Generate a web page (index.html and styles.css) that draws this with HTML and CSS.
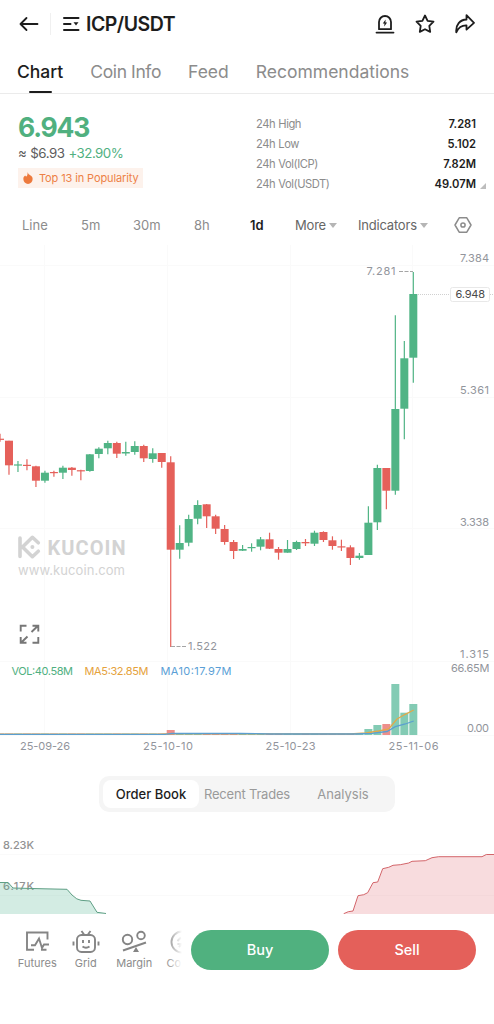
FILE: index.html
```
<!DOCTYPE html>
<html lang="en">
<head>
  <meta charset="UTF-8">
  <title>ICP/USDT</title>
  <meta name="viewport" content="width=device-width, initial-scale=1.0">
  <link rel="stylesheet" href="styles.css">
</head>
<body>

<header class="header">
  <svg class="back" width="20" height="16" viewBox="0 0 20 16"><path d="M18.500 8H1.500M7.500 2L1.500 8L7.500 14"/></svg>
  <span class="divider"></span>
  <svg class="menu" width="17" height="16" viewBox="0 0 17 16"><path d="M1 2H15.500M1 8H7.500M1 14H15.500"/><path class="solid" d="M10.500 6.200h5L13 9.600z"/></svg>
  <h1>ICP/USDT</h1>
  <div class="actions">
    <svg width="20" height="20" viewBox="0 0 20 20"><path d="M4 15.200V8a6 6 0 0 1 12 0v7.200zM1.500 18.600h17"/><path class="solid" d="M10.600 5.500L7.800 9.400h1.700l-.3 3 2.900-4h-1.700z"/></svg>
    <svg width="20" height="20" viewBox="0 0 20 20"><path d="M10 1.500l2.600 5.300 5.900.9-4.200 4.200.9 6-5.200-2.700-5.200 2.700.9-6L1.500 7.700l5.900-.9z"/></svg>
    <svg width="20" height="20" viewBox="0 0 20 20"><path d="M11.500 1.200L19 8.800l-7.500 6.800v-4.200C6 11.200 3.500 13.500 1.300 18.300 0.500 10.500 5 5.800 11.500 5.500z"/></svg>
  </div>
</header>

<nav class="tabs">
  <a class="active">Chart</a>
  <a class="coin">Coin Info</a>
  <a>Feed</a>
  <a>Recommendations</a>
</nav>

<section class="summary">
  <div class="price-box">
    <div class="price">6.943</div>
    <div class="fiat">≈ $6.93 <span>+32.90%</span></div>
    <div class="rank">
      <svg width="10" height="12" viewBox="0 0 10 12"><path d="M4.600 0C5 2 6.500 2.600 7.200 3.300 9 4.300 9.800 5.500 9.600 7.300A4.600 4.600 0 0 1 .4 7.300C.2 5.500 1 4.400 2.200 3.500c.2.700.7 1 1.200 1C4.500 3.500 4.700 1.800 4.600 0z"/></svg>
      <span>Top 13 in Popularity</span>
    </div>
  </div>
  <div class="stats">
    <div><span>24h High</span><b>7.281</b></div>
    <div><span>24h Low</span><b>5.102</b></div>
    <div><span>24h Vol(ICP)</span><b>7.82M</b></div>
    <div><span>24h Vol(USDT)</span><b>49.07M</b></div>
    <i class="corner"></i>
  </div>
</section>

<nav class="intervals">
  <span>Line</span>
  <span>5m</span>
  <span>30m</span>
  <span>8h</span>
  <span class="active">1d</span>
  <span class="drop">More<i></i></span>
  <span class="drop">Indicators<i></i></span>
  <svg width="18" height="18" viewBox="0 0 18 18"><path d="M5.200 1.800h7.600L17 9l-4.200 7.200H5.200L1 9z"/><circle cx="9" cy="9" r="2.100"/></svg>
</nav>

<svg class="chart" width="494" height="512" viewBox="0 245 494 512">
  <g class="grid">
    <path d="M44.500 245V735M167.500 245V735M290.500 245V735M412.500 245V735"/>
    <path d="M0 265.500H494M0 397.500H494M0 528.500H494M0 661.500H494M0 735.500H494"/>
  </g>

  <g class="watermark">
    <path d="M20 538V556.500M38.300 542.800L32.400 537.300L22.500 547L32.400 556.700L38.300 551.200"/>
    <circle cx="32.400" cy="547" r="2"/>
    <text class="brand" x="47.500" y="554.500" textLength="78">KUCOIN</text>
    <text class="site" x="18" y="574.500" textLength="107">www.kucoin.com</text>
  </g>

  <g id="candles"></g>
  <g id="volume"></g>
  <path class="ma5" d="M0 734.200H160L172 733.600 350 734 366 733 378.700 731 388.700 729 397 719 405.300 714.300 413.700 710"/>
  <path class="ma10" d="M0 734.300H165L172 733.500 240 733.300 270 734H355L372 733.300 387 731.500 395.300 726.700 405.300 724 413.700 721"/>

  <path class="guide" d="M171 646.500H186M399 271.500H413"/>
  <path class="last" d="M418 294.500H494"/>
  <rect class="last-box" x="450.500" y="287.500" width="39" height="14" rx="2"/>

  <g class="labels">
    <text x="188" y="650.300" textLength="29">1.522</text>
    <text x="366.500" y="274.800" textLength="29">7.281</text>
    <text x="460" y="262.300" textLength="29">7.384</text>
    <text class="dark" x="455.500" y="298.300" textLength="29.500">6.948</text>
    <text x="460" y="394.300" textLength="29">5.361</text>
    <text x="460" y="526.300" textLength="29">3.338</text>
    <text x="460" y="658.300" textLength="29">1.315</text>
    <text x="451" y="671.500" textLength="38.500">66.65M</text>
    <text x="467" y="732" textLength="22">0.00</text>
    <text x="20" y="749.500" textLength="50">25-09-26</text>
    <text x="143" y="749.500" textLength="50">25-10-10</text>
    <text x="265.500" y="749.500" textLength="50">25-10-23</text>
    <text x="388.500" y="749.500" textLength="50">25-11-06</text>
    <text class="vol" x="11.500" y="675.300" textLength="61.500">VOL:40.58M</text>
    <text class="m5" x="84.500" y="675.300" textLength="64">MA5:32.85M</text>
    <text class="m10" x="160.500" y="675.300" textLength="71">MA10:17.97M</text>
  </g>

  <path class="expand" d="M20.700 631.500V625.700H26.500M38.300 637V642.800H32.500M31.500 632L38 625.700M32.500 625.700H38.300V631.500M27.500 636.500L21 642.800M26.500 642.800H20.700V637"/>
</svg>

<nav class="segment">
  <span class="active">Order Book</span>
  <span class="trades">Recent Trades</span>
  <span>Analysis</span>
</nav>

<svg class="depth" width="494" height="89" viewBox="0 825 494 89">
  <path class="grid-line" d="M0 854.500H494M0 895.500H494"/>
  <text x="3" y="849.300" textLength="31">8.23K</text>
  <text x="3" y="890" textLength="31">6.17K</text>
  <path class="bid-fill" d="M0 882.500H8L13 888 44 888.800 67 889.300 72 895Q77 900 81 900.300L90 901 97 912.300 106 914H0z"/>
  <path class="bid" d="M0 882.500H8L13 888 44 888.800 67 889.300 72 895Q77 900 81 900.300L90 901 97 912.300 106 913.500"/>
  <path class="ask-fill" d="M343.700 914L348.300 911.700 353 911 358 895.700 363.700 894.700 367.700 892.700 373 882.700 377.700 882 382.700 868.700 388.700 867.300 393 865.300 400.300 864.700 408.700 863 412 861.300 425.300 860.700 432 857.700 438.700 856.700H482L486.300 854.500H494V914z"/>
  <path class="ask" d="M343.700 913.700L348.300 911.700 353 911 358 895.700 363.700 894.700 367.700 892.700 373 882.700 377.700 882 382.700 868.700 388.700 867.300 393 865.300 400.300 864.700 408.700 863 412 861.300 425.300 860.700 432 857.700 438.700 856.700H482L486.300 854.500H494"/>
</svg>

<footer class="bottom">
  <div class="shortcuts">
    <a class="futures">
      <svg width="26" height="22" viewBox="0 0 26 22"><path d="M10 19.800H3V2.500H23.500V9.500M7 15.200H11L15 8.500 18 18 20 14.500H25M17 19.800H22.500"/></svg>
      <span>Futures</span>
    </a>
    <a class="grid-bot">
      <svg width="28" height="24" viewBox="0 0 28 24"><rect x="5" y="5" width="18" height="17" rx="4.500"/><path d="M9.500 1L12 4.500M18.500 1L16 4.500M1.500 11.500V15.500M26.500 11.500V15.500M11 10V13M17 10V13M10.500 16.500Q14 19 17.500 16.500"/></svg>
      <span>Grid</span>
    </a>
    <a class="margin">
      <svg width="26" height="22" viewBox="0 0 26 22"><circle cx="6.500" cy="9.500" r="4.700"/><circle cx="20" cy="5.500" r="3.800"/><path d="M2 20.500L25 12.500"/><path class="tri" d="M15 17L18 22H12z"/></svg>
      <span>Margin</span>
    </a>
    <a class="more">
      <svg width="24" height="24" viewBox="0 0 24 24"><circle cx="12" cy="12" r="10.500"/><path d="M7.500 11L11 7.500M7.500 14H12L9 17"/></svg>
      <span>Co</span>
    </a>
  </div>
  <button class="buy">Buy</button>
  <button class="sell">Sell</button>
</footer>

<script src="chart.js"></script>
</body>
</html>
```
FILE: styles.css
```
* {
  box-sizing: border-box;
}
body {
  margin: 0;
  width: 494px;
  height: 1024px;
  overflow: hidden;
  background: #fff;
  color: #1d1d1d;
  font-family: Inter, Roboto, sans-serif;
}
svg {
  display: block;
  flex: none;
  fill: none;
}
.header {
  display: flex;
  align-items: center;
  height: 48px;
  padding: 0 19px;
}
.header svg {
  stroke: #1d1d1d;
  stroke-width: 1.8;
  stroke-linecap: round;
  stroke-linejoin: round;
}
.header .menu {
  stroke-width: 2;
}
.header .solid {
  fill: #1d1d1d;
  stroke: none;
}
.divider {
  width: 1px;
  height: 22px;
  margin: 0 12px 0 11px;
  background: #f0f0f0;
}
h1 {
  margin: 0 0 0 6px;
  font-size: 19.5px;
  font-weight: 600;
  letter-spacing: -0.5px;
}
.actions {
  display: flex;
  gap: 20px;
  margin-left: auto;
}
.tabs {
  display: flex;
  gap: 27px;
  height: 46px;
  padding: 0 17px;
  border-bottom: 1px solid #ebebeb;
  font-size: 17.5px;
  line-height: 48px;
  color: #8c8c8c;
}
.tabs a {
  position: relative;
}
.tabs .coin {
  letter-spacing: -0.4px;
}
.tabs .active {
  color: #1d1d1d;
  font-weight: 500;
}
.tabs .active::after {
  content: "";
  position: absolute;
  left: 12px;
  bottom: 0;
  width: 23px;
  height: 2px;
  border-radius: 1px;
  background: #1d1d1d;
}
.summary {
  display: flex;
  height: 111px;
  padding: 17px 18px 0;
}
.price-box {
  width: 238px;
}
.price {
  font-size: 26.5px;
  line-height: 32px;
  font-weight: 700;
  letter-spacing: -1.2px;
  color: #50b07f;
}
.fiat {
  margin-top: 2px;
  font-size: 13.3px;
  line-height: 16px;
  letter-spacing: -0.5px;
  word-spacing: 0.8px;
  color: #5c5c5c;
}
.fiat span {
  color: #50b07f;
}
.rank {
  display: inline-flex;
  align-items: center;
  gap: 6px;
  height: 20px;
  margin-top: 7px;
  padding: 0 4px 0 5px;
  background: #fdf2ec;
  color: #ed8146;
  font-size: 11px;
  letter-spacing: -0.12px;
  white-space: nowrap;
}
.rank svg {
  fill: #ed7a3d;
}
.stats {
  position: relative;
  flex: 1;
  padding-top: 2.5px;
  font-size: 11.2px;
  line-height: 20.2px;
  color: #8c8c8c;
}
.stats div {
  display: flex;
  justify-content: space-between;
}
.stats span {
  letter-spacing: -0.45px;
  word-spacing: 0.5px;
}
.stats b {
  font-weight: 600;
  color: #1d1d1d;
}
.corner {
  position: absolute;
  right: -10px;
  bottom: 16px;
  border-left: 6px solid transparent;
  border-bottom: 6px solid #bdbdbd;
}
.intervals {
  display: grid;
  grid-template-columns: 59px 52px 61px 56px 45px 63px 96px 18px;
  align-items: center;
  height: 40px;
  padding-left: 22px;
  font-size: 13px;
  color: #8c8c8c;
}
.intervals .active {
  color: #1d1d1d;
  font-weight: 600;
}
.intervals .drop {
  display: flex;
  align-items: center;
  color: #666;
  letter-spacing: -0.2px;
}
.drop i {
  margin-left: 3px;
  border: 4px solid transparent;
  border-top: 5px solid #b5b5b5;
  border-bottom: 0;
}
.intervals svg {
  stroke: #8c8c8c;
  stroke-width: 1.5;
  stroke-linejoin: round;
}

/* price chart */
.grid path,
.grid-line {
  stroke: #fafafa;
}
.watermark path {
  stroke: #d3d3d3;
  stroke-width: 3.6;
  stroke-linecap: round;
  stroke-linejoin: round;
}
.watermark circle,
.watermark text {
  fill: #d3d3d3;
}
.brand {
  font-family: Roboto, sans-serif;
  font-size: 20px;
  font-weight: 700;
}
.site {
  font-size: 13px;
}
.up {
  fill: #50b485;
  stroke: #50b485;
}
.down {
  fill: #e5605a;
  stroke: #e5605a;
}
#candles path {
  stroke-width: 1.2;
}
#candles rect,
#volume rect {
  stroke: none;
}
#volume rect {
  opacity: 0.7;
}
#volume .up {
  fill: #4eb594;
}
.ma5 {
  stroke: #e2a84a;
  stroke-width: 1.3;
}
.ma10 {
  stroke: #5b9fd0;
  stroke-width: 1.3;
}
.guide {
  stroke: #a5a5a5;
  stroke-dasharray: 4 1.5;
}
.last {
  stroke: #d0d0d0;
  stroke-dasharray: 1 1;
}
.last-box {
  fill: #fff;
  stroke: #e8e8e8;
}
.labels text {
  font-size: 11px;
  fill: #92959c;
}
.labels .dark {
  fill: #4a4a4a;
}
.labels .vol {
  fill: #50b07f;
}
.labels .m5 {
  fill: #e5a23c;
}
.labels .m10 {
  fill: #5b9fd6;
}
.expand {
  stroke: #777;
  stroke-width: 1.9;
}

.segment {
  display: flex;
  align-items: center;
  width: 296px;
  height: 36px;
  margin: 19px 0 13px 99px;
  padding: 4px;
  border-radius: 10px;
  background: #f5f5f5;
  font-size: 13px;
  color: #9a9a9a;
}
.segment span {
  flex: 1;
  line-height: 28px;
  text-align: center;
  white-space: nowrap;
}
.segment .trades {
  letter-spacing: -0.2px;
}
.segment .active {
  border-radius: 8px;
  background: #fff;
  color: #1d1d1d;
  font-weight: 500;
}

/* depth chart */
.depth text {
  font-size: 11px;
  font-weight: 500;
  fill: #929292;
}
.bid-fill {
  fill: #4fb591;
  opacity: 0.25;
}
.bid {
  stroke: #5f9f85;
}
.ask-fill {
  fill: #e0606a;
  opacity: 0.22;
}
.ask {
  stroke: #d3656a;
}

.bottom {
  display: flex;
  gap: 9px;
  height: 110px;
  padding: 16px 18px 0 0;
}
.shortcuts {
  position: relative;
  display: flex;
  width: 182px;
  height: 45px;
  padding-left: 13px;
  overflow: hidden;
}
.shortcuts::after {
  content: "";
  position: absolute;
  top: 0;
  right: 0;
  width: 16px;
  height: 45px;
  background: linear-gradient(to right, rgba(255,255,255,0), #fff);
}
.shortcuts a {
  display: flex;
  flex: none;
  flex-direction: column;
  align-items: center;
  justify-content: space-between;
  width: 48.5px;
  height: 41px;
  font-size: 11px;
  line-height: 15px;
  color: #8c8c8c;
}
.shortcuts .more {
  align-items: flex-start;
  padding-left: 8px;
}
.shortcuts .more svg {
  margin-left: 3px;
}
.shortcuts svg {
  stroke: #858585;
  stroke-width: 1.9;
}
.shortcuts .tri {
  fill: #858585;
  stroke: none;
}
button {
  flex: 1;
  height: 40px;
  padding: 0 0 2px;
  border: none;
  border-radius: 20px;
  color: #fff;
  font: 500 14.5px Inter, sans-serif;
}
.buy {
  background: #50b17f;
}
.sell {
  background: #e4605a;
}
```
FILE: chart.js
```
const STEP = 8.985;
const BASE = 735;

// direction, body top, body bottom, wick top, wick bottom
const candles = [
  ['down', 438.7, 439.9, 433.7, 441.7],
  ['down', 440.7, 465.3, 440.7, 474.7],
  ['up', 464.4, 465.6, 461, 472],
  ['down', 464.8, 466, 459.3, 470.3],
  ['down', 466.3, 480.7, 465.7, 487],
  ['up', 472.7, 480.7, 470.7, 482.7],
  ['down', 472, 473.2, 470.7, 476.7],
  ['up', 467.7, 472.7, 465.7, 479],
  ['down', 467.7, 470, 467, 475.7],
  ['down', 470.2, 471.4, 469.7, 480.3],
  ['up', 454.3, 471, 454, 471.7],
  ['up', 448.7, 454, 447.3, 458.3],
  ['up', 443, 448.3, 440.7, 454.3],
  ['down', 443, 453.7, 441.7, 458],
  ['up', 452, 453.5, 441.7, 455.7],
  ['up', 446, 452, 441.3, 454.7],
  ['down', 446, 458.3, 444.7, 462],
  ['up', 453.3, 459, 448.3, 462.7],
  ['down', 453, 462, 453, 467.7],
  ['down', 462.3, 549.7, 456.3, 647],
  ['up', 543, 549.7, 525.3, 558.7],
  ['up', 519, 542.7, 514.7, 546.3],
  ['up', 505, 518.7, 500.3, 524.3],
  ['down', 504.3, 516.3, 504, 528],
  ['down', 516.3, 528.7, 514.7, 534],
  ['down', 529, 542, 525, 544.7],
  ['down', 542, 551, 540, 559],
  ['up', 549, 550.7, 545, 551],
  ['up', 547, 548.2, 543.3, 551.7],
  ['up', 539.3, 546.7, 537, 550.3],
  ['down', 539.3, 548.7, 532.7, 549],
  ['down', 549, 552.7, 547, 559.7],
  ['up', 549, 552.7, 540, 552.7],
  ['up', 542, 549, 540.7, 550],
  ['down', 542, 543.3, 539, 546],
  ['up', 532.7, 543.7, 530.7, 546],
  ['down', 532, 540, 531.3, 542],
  ['down', 540.3, 546, 536.3, 549.7],
  ['down', 546.3, 547.5, 539.7, 551],
  ['down', 547.3, 558, 545.3, 565],
  ['up', 555.7, 558, 553, 559.7],
  ['up', 522.7, 555, 506.3, 555],
  ['up', 468, 522.3, 464.7, 530],
  ['down', 468, 490.7, 468, 509.3],
  ['up', 409, 490.7, 315.3, 494.7],
  ['up', 358.3, 408.7, 341, 439.3],
  ['up', 294, 357.7, 272, 382.7]
];

// bars taller than one pixel
const volumes = { 19: 5, 41: 6, 42: 10, 43: 11, 44: 51, 45: 22.3, 46: 31 };

let bodies = '';
let bars = '';

candles.forEach(([dir, top, bottom, high, low], i) => {
  const x = i * STEP;
  const vol = volumes[i] || 1.3;
  bodies += `<g class="${dir}"><path d="M${x} ${high}V${low}"/><rect x="${x - 4}" y="${top}" width="8" height="${bottom - top}"/></g>`;
  bars += `<rect class="${dir}" x="${x - 4}" y="${BASE - vol}" width="8" height="${vol}"/>`;
});

document.getElementById('candles').innerHTML = bodies;
document.getElementById('volume').innerHTML = bars;
```
